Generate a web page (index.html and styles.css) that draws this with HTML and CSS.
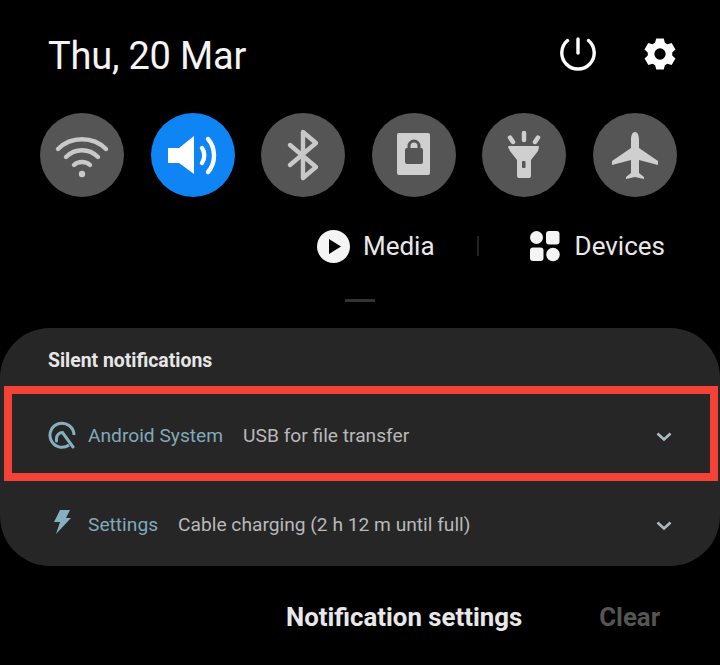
FILE: index.html
```html
<!DOCTYPE html>
<html lang="en">
<head>
  <meta charset="UTF-8" />
  <title>Quick panel</title>
  <link rel="stylesheet" href="styles.css">
</head>
<body>
  <div class="top">
    <h1 class="date">Thu, 20 Mar</h1>
    <div class="top-icons">
      <svg class="power" viewBox="0 0 36 38" width="36" height="38">
        <path d="M7.500 5.500A16.200 16.200 0 1 0 28.500 5.500" fill="none" stroke="#fff" stroke-width="3.400" stroke-linecap="round"/>
        <path d="M18 4V18" fill="none" stroke="#fff" stroke-width="3.400" stroke-linecap="round"/>
      </svg>
      <svg class="gear" viewBox="0 0 34 36" width="32" height="34">
        <path fill-rule="evenodd" fill="#fff" d="M13 1.500h8l1.200 4.600 2.600 1.500 4.600-1.300 4 6.900-3.400 3.300v3l3.400 3.300-4 6.900-4.600-1.300-2.600 1.500-1.200 4.600h-8l-1.200-4.600-2.600-1.500-4.600 1.300-4-6.900 3.400-3.300v-3L.5 13.200l4-6.900 4.600 1.300 2.600-1.500zM17 12a6 6 0 1 0 0 12 6 6 0 0 0 0-12z"/>
      </svg>
    </div>
  </div>

  <div class="toggles">
    <div class="toggle">
      <svg viewBox="0 0 84 84" width="84" height="84" fill="none" stroke="#c9c9c9" stroke-width="4.400" stroke-linecap="round">
        <path d="M18 36C31 23 53 23 66 36"/>
        <path d="M26 44C35 35 49 35 58 44"/>
        <path d="M34 52C38 48 46 48 50 52"/>
        <circle cx="42" cy="61" r="3.200" fill="#c9c9c9" stroke="none"/>
      </svg>
    </div>
    <div class="toggle on">
      <svg viewBox="0 0 84 84" width="84" height="84">
        <path fill="#fff" d="M17 35h11l15-12v38L28 50H17z"/>
        <path d="M51 35C54 39 54 46 51 50" fill="none" stroke="#fff" stroke-width="4.400" stroke-linecap="round"/>
        <path d="M57 26C65 35 65 50 57 59" fill="none" stroke="#fff" stroke-width="4.400" stroke-linecap="round"/>
      </svg>
    </div>
    <div class="toggle">
      <svg viewBox="0 0 84 84" width="84" height="84" fill="none" stroke="#c9c9c9" stroke-width="4.400" stroke-linecap="round" stroke-linejoin="round">
        <path d="M29 32L55 54L42 65V19L55 30L29 52"/>
      </svg>
    </div>
    <div class="toggle">
      <svg viewBox="0 0 84 84" width="84" height="84">
        <rect x="25" y="20" width="33" height="42" rx="2" fill="#cfcfcf"/>
        <rect x="33" y="35" width="18" height="16" rx="2" fill="#555"/>
        <path d="M37 36V33A5 5 0 0 1 47 33V36" fill="none" stroke="#555" stroke-width="3"/>
      </svg>
    </div>
    <div class="toggle">
      <svg viewBox="0 0 84 84" width="84" height="84">
        <path fill="#cfcfcf" d="M27 33h29a1 1 0 0 1 1 1l-1 4-7 9v16a2 2 0 0 1-2 2H37a2 2 0 0 1-2-2V47l-7-9-2-4a1 1 0 0 1 1-1z"/>
        <rect x="40" y="48" width="3.500" height="7" rx="1" fill="#555"/>
        <path d="M42 20V27M28 24.500L31 29M56 24.500L53 29" fill="none" stroke="#cfcfcf" stroke-width="4.500" stroke-linecap="round"/>
      </svg>
    </div>
    <div class="toggle">
      <svg viewBox="0 0 84 84" width="84" height="84">
        <path fill="#cfcfcf" d="M42 19C45 19 46 23 46 27V35L65 48V52L46 47V60L51 64V66L42 64L33 66V64L38 60V47L19 52V48L38 35V27C38 23 39 19 42 19Z"/>
      </svg>
    </div>
  </div>

  <div class="media-row">
    <div class="media-item">
      <svg viewBox="0 0 33 33" width="33" height="33">
        <path fill-rule="evenodd" fill="#f4f4f4" d="M16.500 0a16.500 16.500 0 1 0 0 33 16.500 16.500 0 0 0 0-33zM12 9l12 7.500L12 24z"/>
      </svg>
      <span>Media</span>
    </div>
    <div class="divider"></div>
    <div class="media-item devices">
      <svg viewBox="0 0 32 32" width="32" height="32" fill="#f4f4f4">
        <circle cx="7.500" cy="7.500" r="6.500"/>
        <rect x="17" y="1" width="13.500" height="13.500" rx="3"/>
        <rect x="1" y="17.500" width="13.500" height="13.500" rx="3"/>
        <circle cx="24" cy="24.500" r="6.800"/>
      </svg>
      <span>Devices</span>
    </div>
  </div>

  <div class="handle"></div>

  <div class="panel">
    <h2 class="panel-title">Silent notifications</h2>
    <div class="notif highlighted">
      <svg class="app-icon" viewBox="0 0 28 28" width="28" height="28" fill="none" stroke="#86b0bf" stroke-width="3">
        <path d="M21 24A12 12 0 1 1 26 14"/>
        <path d="M8.500 20V17.500A6 6 0 0 1 14.500 11.500L25 26" stroke-linecap="round"/>
      </svg>
      <span class="app">Android System</span>
      <span class="msg">USB for file transfer</span>
      <svg class="chevron" viewBox="0 0 16 10" width="16" height="10"><path d="M1.500 1.500L8 7.500L14.500 1.500" fill="none" stroke="#a9bcc4" stroke-width="2.600"/></svg>
    </div>
    <div class="notif">
      <svg class="app-icon bolt" viewBox="0 0 20 26" width="20" height="26"><path fill="#86b0bf" d="M8 1h10l-4 8h5L4 25l4-12H2z"/></svg>
      <span class="app">Settings</span>
      <span class="msg">Cable charging (2 h 12 m until full)</span>
      <svg class="chevron" viewBox="0 0 16 10" width="16" height="10"><path d="M1.500 1.500L8 7.500L14.500 1.500" fill="none" stroke="#a9bcc4" stroke-width="2.600"/></svg>
    </div>
  </div>

  <div class="footer">
    <span class="footer-settings">Notification settings</span>
    <span class="footer-clear">Clear</span>
  </div>
</body>
</html>
```

FILE: styles.css
```css
body {
  margin: 0;
  height: 665px;
  overflow: hidden;
  background-color: #000;
  color: #f4f4f4;
  font-family: Roboto, sans-serif;
}

/* Date and top icons */
.top {
  display: flex;
  justify-content: space-between;
  align-items: center;
  height: 38px;
  padding: 37px 44px 0 48px;
}
.date {
  margin: 0;
  font-size: 38px;
  font-weight: 400;
  letter-spacing: -0.2px;
}
.top-icons {
  display: flex;
  align-items: center;
  gap: 48px;
  margin-bottom: 5px;
}

/* Quick toggles */
.toggles {
  display: flex;
  justify-content: space-between;
  padding: 38px 43px 0 40px;
}
.toggle {
  width: 84px;
  height: 84px;
  border-radius: 50%;
  background-color: #555;
}
.toggle svg {
  display: block;
}
.toggle.on {
  background-color: #0e84f5;
}

/* Media / Devices */
.media-row {
  display: flex;
  justify-content: flex-end;
  align-items: center;
  height: 34px;
  margin-top: 32px;
  padding-right: 55px;
}
.media-item {
  display: flex;
  align-items: center;
  gap: 13px;
  font-size: 26px;
  color: #e8e8e8;
}
.media-item.devices {
  gap: 14px;
}
.divider {
  width: 2px;
  height: 20px;
  margin: 0 50px 0 42px;
  background-color: #222;
}
.handle {
  width: 30px;
  height: 3px;
  margin: 36px auto 0 345px;
  background-color: #333;
}

/* Notifications */
.panel {
  height: 238px;
  margin-top: 26px;
  border-radius: 50px;
  background-color: #262626;
}
.panel-title {
  height: 58px;
  margin: 0;
  padding-left: 48px;
  box-sizing: border-box;
  padding-top: 21px;
  font-size: 19.400px;
  font-weight: 700;
  color: #e6e6e6;
}
.notif {
  display: flex;
  align-items: center;
  box-sizing: border-box;
  height: 85px;
  padding: 1px 48px 0;
  font-size: 19.200px;
}
.notif.highlighted {
  height: 95px;
  margin: 0 2px 0 4px;
  padding: 3px 38px 0 36px;
  border: 8px solid #f44336;
}
.app-icon {
  flex-shrink: 0;
  margin-right: 12px;
}
.bolt {
  margin-left: 4px;
  margin-right: 16px;
  margin-bottom: 4px;
}
.app {
  color: #82a9b9;
  margin-right: 20px;
}
.msg {
  color: #b9b9b9;
}
.chevron {
  margin-left: auto;
  margin-top: 4px;
}

/* Footer buttons */
.footer {
  display: flex;
  align-items: center;
  height: 30px;
  margin-top: 36px;
  padding-left: 286px;
  font-size: 25.800px;
  font-weight: 700;
}
.footer-settings {
  color: #e8e8e8;
}
.footer-clear {
  margin-left: 77px;
  color: #555;
}
```
